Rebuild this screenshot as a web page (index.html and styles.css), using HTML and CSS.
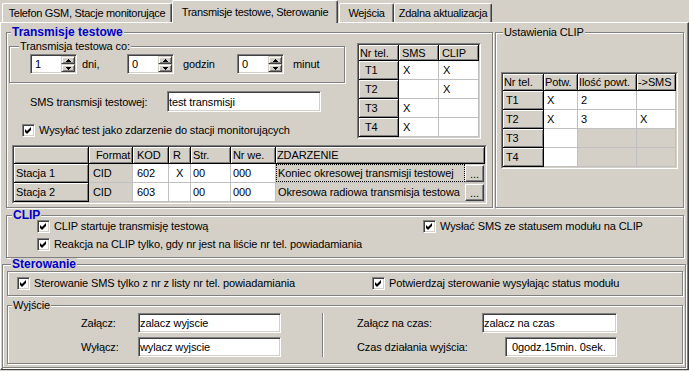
FILE: index.html
```html
<!DOCTYPE html>
<html>
    <head>
        <meta charset="utf-8">
        <title>Transmisje testowe, Sterowanie</title>
        <link rel="stylesheet" href="styles.css">
    </head>
    <body>
        <div class="tabs">
            <div class="tab tab-gsm">Telefon GSM, Stacje monitorujące</div>
            <div class="tab tab-test active">Transmisje testowe, Sterowanie</div>
            <div class="tab tab-in">Wejścia</div>
            <div class="tab tab-upd">Zdalna aktualizacja</div>
        </div>
        <div class="page">
            <div class="top-row">
                <div class="group grp-test">
                    <div class="title bold">Transmisje testowe</div>
                    <div class="test-top">
                        <div class="test-left">
                            <div class="group grp-period">
                                <div class="title">Transmisja testowa co:</div>
                                <div class="period-row">
                                    <div class="spin"><span class="val">1</span><span class="spin-btns"><span class="sb"><svg width="7" height="3"><path d="M3 0h1v1h1v1h1v1H1V2h1V1h1z"/></svg></span><span class="sb"><svg width="7" height="3"><path d="M1 0h5v1H5v1H4v1H3V2H2V1H1z"/></svg></span></span></div>
                                    <span class="unit u-days">dni,</span>
                                    <div class="spin"><span class="val">0</span><span class="spin-btns"><span class="sb"><svg width="7" height="3"><path d="M3 0h1v1h1v1h1v1H1V2h1V1h1z"/></svg></span><span class="sb"><svg width="7" height="3"><path d="M1 0h5v1H5v1H4v1H3V2H2V1H1z"/></svg></span></span></div>
                                    <span class="unit u-hours">godzin</span>
                                    <div class="spin"><span class="val">0</span><span class="spin-btns"><span class="sb"><svg width="7" height="3"><path d="M3 0h1v1h1v1h1v1H1V2h1V1h1z"/></svg></span><span class="sb"><svg width="7" height="3"><path d="M1 0h5v1H5v1H4v1H3V2H2V1H1z"/></svg></span></span></div>
                                    <span class="unit u-min">minut</span>
                                </div>
                            </div>
                            <div class="sms-row">
                                <label class="sms-label">SMS transmisji testowej:</label>
                                <input class="edit sms-edit" type="text" value="test transmisji">
                            </div>
                            <label class="chk chk-send"><span class="cb"><svg width="9" height="9"><path d="M1 3v3l2 2 4-4V1L3 5z"/></svg></span>Wysyłać test jako zdarzenie do stacji monitorujących</label>
                        </div>
                        <div class="grid-box tel-box">
                            <table class="grid tel-grid">
                                <colgroup><col class="w40"><col class="w40"><col class="w40"></colgroup>
                                <thead>
                                    <tr class="h16"><th>Nr tel.</th><th>SMS</th><th>CLIP</th></tr>
                                </thead>
                                <tbody>
                                    <tr><th>T1</th><td>X</td><td>X</td></tr>
                                    <tr><th>T2</th><td></td><td>X</td></tr>
                                    <tr><th>T3</th><td>X</td><td></td></tr>
                                    <tr><th>T4</th><td>X</td><td></td></tr>
                                </tbody>
                            </table>
                        </div>
                    </div>
                    <div class="grid-box ev-box">
                        <table class="grid ev-grid">
                            <colgroup>
                                <col class="w75"><col class="w44"><col class="w36"><col class="w22"><col class="w40"><col class="w45"><col class="w209">
                            </colgroup>
                            <thead>
                                <tr class="h17"><th></th><th class="fmt">Format</th><th>KOD</th><th>R</th><th class="p2">Str.</th><th class="p2">Nr we.</th><th class="p1">ZDARZENIE</th></tr>
                            </thead>
                            <tbody>
                                <tr>
                                    <th>Stacja 1</th><td class="ro">CID</td><td>602</td><td class="r">X</td><td class="p2">00</td><td class="p2">000</td>
                                    <td class="ro ev"><div class="ev-cell"><span class="ev-text focus">Koniec okresowej transmisji testowej</span><span class="dots">...</span></div></td>
                                </tr>
                                <tr>
                                    <th>Stacja 2</th><td class="ro">CID</td><td>603</td><td class="r"></td><td class="p2">00</td><td class="p2">000</td>
                                    <td class="ro ev"><div class="ev-cell"><span class="ev-text">Okresowa radiowa transmisja testowa</span><span class="dots">...</span></div></td>
                                </tr>
                            </tbody>
                        </table>
                    </div>
                </div>
                <div class="group grp-clipset">
                    <div class="title">Ustawienia CLIP</div>
                    <div class="grid-box clip-box">
                        <table class="grid clip-grid">
                            <colgroup><col class="w41"><col class="w34"><col class="w59"><col class="w39"></colgroup>
                            <thead>
                                <tr class="h17"><th>Nr tel.</th><th>Potw.</th><th>Ilość powt.</th><th>-&gt;SMS</th></tr>
                            </thead>
                            <tbody>
                                <tr><th>T1</th><td>X</td><td>2</td><td></td></tr>
                                <tr><th>T2</th><td>X</td><td>3</td><td>X</td></tr>
                                <tr><th>T3</th><td></td><td class="ro"></td><td class="ro"></td></tr>
                                <tr><th>T4</th><td></td><td class="ro"></td><td class="ro"></td></tr>
                            </tbody>
                        </table>
                    </div>
                </div>
            </div>

            <div class="group grp-clip">
                <div class="title bold">CLIP</div>
                <div class="clip-row first">
                    <label class="chk chk-wide"><span class="cb"><svg width="9" height="9"><path d="M1 3v3l2 2 4-4V1L3 5z"/></svg></span>CLIP startuje transmisję testową</label>
                    <label class="chk"><span class="cb"><svg width="9" height="9"><path d="M1 3v3l2 2 4-4V1L3 5z"/></svg></span>Wysłać SMS ze statusem modułu na CLIP</label>
                </div>
                <div class="clip-row">
                    <label class="chk"><span class="cb"><svg width="9" height="9"><path d="M1 3v3l2 2 4-4V1L3 5z"/></svg></span>Reakcja na CLIP tylko, gdy nr jest na liście nr tel. powiadamiania</label>
                </div>
            </div>

            <div class="group grp-ster">
                <div class="title bold">Sterowanie</div>
                <div class="group ster-box">
                    <label class="chk chk-ster"><span class="cb"><svg width="9" height="9"><path d="M1 3v3l2 2 4-4V1L3 5z"/></svg></span>Sterowanie SMS tylko z nr z listy nr tel. powiadamiania</label>
                    <label class="chk"><span class="cb"><svg width="9" height="9"><path d="M1 3v3l2 2 4-4V1L3 5z"/></svg></span>Potwierdzaj sterowanie wysyłając status modułu</label>
                </div>
                <div class="group grp-out">
                    <div class="title">Wyjście</div>
                    <div class="out-body">
                        <div class="out-left">
                            <div class="out-row"><label class="lbl-l">Załącz:</label><input class="edit out-edit" type="text" value="zalacz wyjscie"></div>
                            <div class="out-row"><label class="lbl-l">Wyłącz:</label><input class="edit out-edit" type="text" value="wylacz wyjscie"></div>
                        </div>
                        <div class="vsep"></div>
                        <div class="out-right">
                            <div class="out-row"><label class="lbl-r1">Załącz na czas:</label><input class="edit time-on" type="text" value="zalacz na czas"></div>
                            <div class="out-row"><label class="lbl-r2">Czas działania wyjścia:</label><input class="edit time-len" type="text" value="0godz.15min. 0sek."></div>
                        </div>
                    </div>
                </div>
            </div>
        </div>
    </body>
</html>
```

FILE: styles.css
```css
body {
    margin: 0;
    width: 689px;
    height: 371px;
    overflow: hidden;
    background: #d4d0c8;
    color: #000;
    font: 11px "Liberation Sans", Arial, sans-serif;
    letter-spacing: -0.1px;
}

/* tabs */

.tabs {
    display: flex;
    align-items: flex-end;
    height: 22px;
    padding-left: 2px;
    letter-spacing: -0.3px;
}

.tab {
    box-sizing: border-box;
    height: 19px;
    padding-top: 3px;
    line-height: 13px;
    text-align: center;
    white-space: nowrap;
    border: 1px solid;
    border-bottom: 0;
    border-color: #fff #404040 #fff #fff;
    border-radius: 2px 2px 0 0;
    box-shadow: inset -1px 0 #808080;
}

.tab.active {
    position: relative;
    z-index: 1;
    height: 23px;
    margin-bottom: -1px;
    padding-top: 5px;
    background: #d4d0c8;
}

.tab-gsm { width: 170px; }
.tab-test { width: 166px; }
.tab-in { width: 55px; margin-left: 1px; }
.tab-upd { width: 98px; }

.page {
    box-sizing: border-box;
    height: 348px;
    padding-top: 9px;
    border: 1px solid;
    border-color: #fff #404040 #404040 #fff;
    box-shadow: inset -1px -1px #808080;
}

/* group boxes */

.group {
    box-sizing: border-box;
    border: 1px solid #808080;
    box-shadow: inset 1px 1px #fff, 1px 1px #fff;
}

.title {
    display: table;
    margin-top: -7px;
    padding: 0 1px;
    line-height: 13px;
    background: #d4d0c8;
    white-space: nowrap;
}

.title.bold {
    font-size: 12px;
    font-weight: bold;
    color: #0000c8;
    letter-spacing: 0;
}

.top-row {
    display: grid;
    grid-template-columns: 487px 189px;
    column-gap: 2px;
    height: 176px;
    margin-left: 5px;
}

.grp-test .title { margin-left: 4px; }
.grp-clipset .title { margin-left: 7px; }

.test-top {
    display: flex;
    align-items: flex-start;
}

.test-left { width: 338px; }

.grp-period {
    width: 336px;
    height: 37px;
    margin: 7px 0 0 2px;
}

.grp-period .title { margin-left: 9px; }

.period-row {
    display: flex;
    align-items: center;
    margin-top: 1px;
    padding-left: 20px;
}

.unit { box-sizing: border-box; line-height: 20px; }
.u-days { width: 50px; padding-left: 5px; }
.u-hours { width: 63px; padding-left: 9px; }
.u-min { padding-left: 9px; }

/* sunken edit fields */

.spin, .edit {
    box-sizing: border-box;
    border: 1px solid;
    border-color: #808080 #fff #fff #808080;
    box-shadow: inset 1px 1px #404040, inset -1px -1px #d4d0c8;
    background: #fff;
}

.spin {
    display: flex;
    width: 47px;
    height: 20px;
    padding: 1px;
}

.spin .val {
    flex: 1;
    padding-left: 3px;
    line-height: 16px;
}

.spin-btns {
    display: flex;
    flex-direction: column;
    width: 14px;
}

.sb {
    flex: 1;
    display: flex;
    align-items: center;
    justify-content: center;
    background: #d4d0c8;
    border: 1px solid;
    border-color: #d4d0c8 #404040 #404040 #d4d0c8;
    box-shadow: inset 1px 1px #fff, inset -1px -1px #808080;
}

.sb svg { display: block; }

.edit {
    height: 20px;
    margin: 0;
    padding: 0 0 0 1px;
    font: inherit;
    letter-spacing: inherit;
    color: #000;
    outline: none;
}

.sms-row {
    display: flex;
    align-items: center;
    margin-top: 8px;
    padding-left: 23px;
}

.sms-label { width: 137px; }
.sms-edit { width: 154px; height: 21px; }

/* checkboxes */

.chk {
    display: flex;
    align-items: center;
    gap: 4px;
    line-height: 13px;
    white-space: nowrap;
}

.cb {
    flex: none;
    box-sizing: border-box;
    width: 13px;
    height: 13px;
    padding: 1px;
    border: 1px solid;
    border-color: #808080 #fff #fff #808080;
    box-shadow: inset 1px 1px #404040, inset -1px -1px #d4d0c8;
    background: #fff;
}

.cb svg { display: block; }

.chk-send {
    margin-top: 12px;
    padding-left: 15px;
}

/* string grids */

.grid-box {
    width: max-content;
    border: 1px solid;
    border-color: #808080 #fff #fff #808080;
}

.grid {
    border-collapse: separate;
    border-spacing: 0;
    table-layout: fixed;
    border: 1px solid;
    border-color: #404040 #d4d0c8 #d4d0c8 #404040;
}

.grid tr { height: 19px; }
.grid tr.h16 { height: 16px; }
.grid tr.h17 { height: 17px; }

.grid th, .grid td {
    box-sizing: border-box;
    padding: 0;
    text-align: left;
    font-weight: normal;
    white-space: nowrap;
    overflow: hidden;
    vertical-align: middle;
}

.grid th {
    background: #d4d0c8;
    border-right: 1px solid #000;
    border-bottom: 1px solid #000;
    box-shadow: inset 1px 1px #fff, inset -1px -1px #808080;
}

.grid td {
    background: #fff;
    border-right: 1px solid #c0c0c0;
    border-bottom: 1px solid #c0c0c0;
}

.grid td.ro { background: #d4d0c8; }

.w22 { width: 22px; }
.w34 { width: 34px; }
.w36 { width: 36px; }
.w39 { width: 39px; }
.w40 { width: 40px; }
.w41 { width: 41px; }
.w44 { width: 44px; }
.w45 { width: 45px; }
.w59 { width: 59px; }
.w75 { width: 75px; }
.w209 { width: 209px; }

.tel-box { margin: 4px 0 0 12px; }
.tel-grid { width: 122px; }
.tel-grid th { padding-left: 6px; }
.tel-grid thead th { padding-left: 3px; }
.tel-grid thead th:first-child { padding-left: 1px; }
.tel-grid td { padding-left: 4px; }

.ev-box { margin: 6px 0 0 5px; }
.ev-grid { width: 473px; }
.ev-grid th { padding-left: 2px; }
.ev-grid thead th { padding-left: 4px; }
.ev-grid thead th.fmt { padding-left: 7px; }
.ev-grid td { padding-left: 4px; }
.ev-grid .p2, .ev-grid thead th.p2 { padding-left: 2px; }
.ev-grid thead th.p1 { padding-left: 1px; }
.ev-grid td.r { padding-left: 7px; }
.ev-grid td.ev { padding-left: 0; }

.ev-cell {
    display: flex;
    align-items: center;
    height: 18px;
}

.ev-text {
    flex: 1;
    box-sizing: border-box;
    height: 18px;
    padding-left: 1px;
    line-height: 16px;
    overflow: hidden;
    border: 1px solid transparent;
}

.ev-text.focus { border: 1px dotted #000; }

.dots {
    box-sizing: border-box;
    width: 19px;
    height: 17px;
    line-height: 17px;
    text-align: center;
    border: 1px solid;
    border-color: #fff #404040 #404040 #fff;
    box-shadow: inset -1px -1px #808080;
    background: #d4d0c8;
}

.clip-box { margin: 33px 0 0 5px; }
.clip-grid { width: 175px; }
.clip-grid th { padding-left: 3px; }
.clip-grid thead th { padding-left: 1px; }
.clip-grid td { padding-left: 3px; }

/* CLIP */

.grp-clip {
    width: 678px;
    height: 43px;
    margin: 7px 0 0 5px;
}

.grp-clip .title { margin-left: 5px; }

.clip-row {
    display: flex;
    margin-top: 5px;
    padding-left: 30px;
}

.clip-row.first { margin-top: -2px; }
.chk-wide { width: 386px; }

/* Sterowanie */

.grp-ster {
    width: 684px;
    height: 104px;
    margin: 6px 0 0 1px;
}

.grp-ster .title { margin-left: 8px; }

.ster-box {
    display: flex;
    align-items: center;
    width: 676px;
    height: 25px;
    margin-left: 4px;
    padding-left: 9px;
}

.chk-ster { width: 355px; }

.grp-out {
    width: 676px;
    height: 59px;
    margin: 9px 0 0 4px;
}

.grp-out .title { margin-left: 4px; }

.out-body {
    display: flex;
    margin-top: -2px;
    padding: 3px 0 1px;
}

.out-left {
    box-sizing: border-box;
    width: 314px;
    padding-left: 73px;
}

.out-right { padding-left: 33px; }

.vsep {
    border-left: 1px solid #808080;
    border-right: 1px solid #fff;
}

.out-row {
    display: flex;
    align-items: center;
    height: 20px;
}

.out-row + .out-row { margin-top: 4px; }

.lbl-l { width: 57px; }
.lbl-r1 { width: 125px; }
.lbl-r2 { width: 148px; }
.out-edit { width: 143px; }
.time-on { width: 135px; }
.time-len { width: 112px; padding-left: 6px; }
```
